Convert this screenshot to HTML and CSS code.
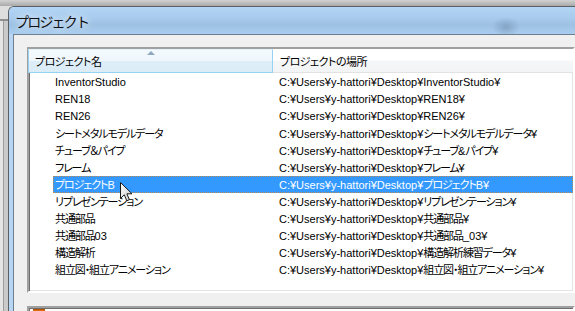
FILE: index.html
```html
<!DOCTYPE html>
<html lang="ja">
<head>
    <meta charset="UTF-8">
    <title>プロジェクト</title>
    <link rel="stylesheet" href="styles.css">
</head>
<body>
    <div class="window">
        <div class="titlebar">
            <span class="title">プロジェクト</span>
        </div>
        <div class="client">
            <div class="listview">
                <div class="lv-header">
                    <div class="hd-cell hd-name"><span class="sort-arrow"></span>プロジェクト名</div>
                    <div class="hd-cell hd-path">プロジェクトの場所</div>
                </div>
                <div class="lv-rows">
                    <div class="row"><div class="item"><span class="c-name">InventorStudio</span><span class="c-path">C:¥Users¥y-hattori¥Desktop¥InventorStudio¥</span></div></div>
                    <div class="row"><div class="item"><span class="c-name">REN18</span><span class="c-path">C:¥Users¥y-hattori¥Desktop¥REN18¥</span></div></div>
                    <div class="row"><div class="item"><span class="c-name">REN26</span><span class="c-path">C:¥Users¥y-hattori¥Desktop¥REN26¥</span></div></div>
                    <div class="row"><div class="item"><span class="c-name"><span class="ja">シートメタルモデルデータ</span></span><span class="c-path">C:¥Users¥y-hattori¥Desktop¥<span class="ja">シートメタルモデルデータ</span>¥</span></div></div>
                    <div class="row"><div class="item"><span class="c-name"><span class="ja">チューブ＆パイプ</span></span><span class="c-path">C:¥Users¥y-hattori¥Desktop¥<span class="ja">チューブ</span>&amp;<span class="ja">パイプ</span>¥</span></div></div>
                    <div class="row"><div class="item"><span class="c-name"><span class="ja">フレーム</span></span><span class="c-path">C:¥Users¥y-hattori¥Desktop¥<span class="ja">フレーム</span>¥</span></div></div>
                    <div class="row selected"><div class="item"><span class="c-name"><span class="ja">プロジェクト</span>B</span><span class="c-path">C:¥Users¥y-hattori¥Desktop¥<span class="ja">プロジェクト</span>B¥</span></div></div>
                    <div class="row"><div class="item"><span class="c-name"><span class="ja">リプレゼンテーション</span></span><span class="c-path">C:¥Users¥y-hattori¥Desktop¥<span class="ja">リプレゼンテーション</span>¥</span></div></div>
                    <div class="row"><div class="item"><span class="c-name"><span class="ja">共通部品</span></span><span class="c-path">C:¥Users¥y-hattori¥Desktop¥<span class="ja">共通部品</span>¥</span></div></div>
                    <div class="row"><div class="item"><span class="c-name"><span class="ja">共通部品</span>03</span><span class="c-path">C:¥Users¥y-hattori¥Desktop¥<span class="ja">共通部品</span>_03¥</span></div></div>
                    <div class="row"><div class="item"><span class="c-name"><span class="ja">構造解析</span></span><span class="c-path">C:¥Users¥y-hattori¥Desktop¥<span class="ja">構造解析練習データ</span>¥</span></div></div>
                    <div class="row"><div class="item"><span class="c-name"><span class="ja">組立図・組立アニメーション</span></span><span class="c-path">C:¥Users¥y-hattori¥Desktop¥<span class="ja">組立図・組立アニメーション</span>¥</span></div></div>
                </div>
            </div>
            <div class="panel">
                <span class="panel-icon"></span>
            </div>
        </div>
    </div>
    <svg class="cursor" width="14" height="21" viewBox="0 0 14 21">
        <defs>
            <linearGradient id="cur" x1="0" y1="0" x2="1" y2="1">
                <stop offset="0" stop-color="#ffffff"/>
                <stop offset="1" stop-color="#c8c8c8"/>
            </linearGradient>
        </defs>
        <path d="M0.5 0.5 L0.5 16.5 L4.3 12.8 L6.8 18.8 L9.4 17.7 L6.9 11.8 L12 11.8 Z" fill="url(#cur)" stroke="#1a1a1a" stroke-width="1" stroke-linejoin="round"/>
    </svg>
</body>
</html>
```

FILE: styles.css
```css
body {
    margin: 0;
    width: 575px;
    height: 311px;
    overflow: hidden;
    position: relative;
    font-family: 'Liberation Sans', 'Noto Sans CJK JP', sans-serif;
    background:
        linear-gradient(#d2d2d2, #a9a9a9) 0 0 / 100% 6px no-repeat,
        linear-gradient(#dedede, #dedede) 0 6px / 100% 13px no-repeat,
        linear-gradient(#8f8f8f, #8f8f8f) 0 19px / 100% 2px no-repeat,
        linear-gradient(to right, #e4e4e4 3px, #9c9c9c 3px, #9c9c9c 4px, #cacaca 4px) 0 21px / 100% 100% no-repeat;
}
.window {
    margin: 6px 0 0 8px;
    height: 305px;
    box-sizing: border-box;
    border-top: 1px solid #5c5f63;
    border-left: 1px solid #5c5f63;
    border-top-left-radius: 6px;
    padding-left: 4px;
    background: #b7d6f3;
    overflow: hidden;
}
.titlebar {
    height: 27px;
    margin-left: -4px;
    padding-left: 6px;
    display: flex;
    align-items: center;
    background:
        radial-gradient(ellipse 14px 10px at 497px 20px, rgba(110, 140, 170, 0.55), rgba(110, 140, 170, 0)),
        linear-gradient(#b3d6f6, #a8cbee 40%, #9ec1e3 65%, #a9cdf0);
}
.title {
    font-family: 'Noto Sans CJK JP', sans-serif;
    font-size: 14px;
    letter-spacing: -1.8px;
    color: #111;
    text-shadow: 0 0 8px #e6f2fc, 0 0 6px #e6f2fc;
}
.client {
    height: 100%;
    border-top: 1px solid #6d7e8f;
    border-left: 1px solid #6d7e8f;
    background: #f0f0f0;
    padding: 12px 0 0 13px;
}
.listview {
    height: 246px;
    box-sizing: border-box;
    border: 2px solid;
    border-color: #a0a0a0 #ffffff #ffffff #a0a0a0;
    box-shadow: inset 1px 1px 0 #6e6e6e, inset -1px -1px 0 #e3e3e3;
    background: #fff;
    font-size: 11px;
    font-feature-settings: "palt";
}
.ja {
    font-family: 'Noto Sans CJK JP', sans-serif;
    letter-spacing: -1.1px;
}
.lv-header {
    display: flex;
    height: 24px;
    margin-left: -1px;
}
.hd-cell {
    box-sizing: border-box;
    display: flex;
    align-items: center;
    font-family: 'Noto Sans CJK JP', sans-serif;
    font-size: 11px;
    letter-spacing: -0.5px;
    color: #000;
}
.hd-name {
    position: relative;
    width: 245px;
    padding-left: 6px;
    border: 1px solid #96d2f1;
    border-top-color: #e4f3fb;
    background: linear-gradient(#f3f9fd 0, #f0f7fc 48%, #deeef8 52%, #dbecf7 100%);
}
.sort-arrow {
    position: absolute;
    top: 1px;
    left: 118px;
    width: 0;
    height: 0;
    border-left: 4px solid transparent;
    border-right: 4px solid transparent;
    border-bottom: 4px solid #8ea9bf;
}
.hd-path {
    flex: 1;
    padding-left: 7px;
    border-bottom: 1px solid #e2e2e2;
    background: linear-gradient(#ffffff 0, #ffffff 48%, #f5f6f7 52%, #f3f4f6 100%);
}
.lv-rows {
    margin-top: 1px;
}
.row {
    display: flex;
    height: 17px;
    line-height: 17px;
    padding-left: 24px;
}
.item {
    flex: 1;
    display: flex;
    white-space: nowrap;
    color: #000;
}
.c-name {
    width: 220px;
    flex: none;
    box-sizing: border-box;
    padding-left: 2px;
}
.c-path {
    padding-left: 6px;
}
.row.selected .item {
    background: #3399ff;
    color: #fff;
    outline: 1px dotted #b98a5a;
    outline-offset: -1px;
}
.panel {
    margin-top: 13px;
    height: 20px;
    border: 2px solid;
    border-color: #a0a0a0 #ffffff #ffffff #a0a0a0;
    box-shadow: inset 1px 1px 0 #6e6e6e;
    background: #fff;
    padding: 1px 0 0 4px;
}
.panel-icon {
    display: block;
    width: 12px;
    height: 10px;
    background: #e46c0a;
    border-top: 1px solid #b55305;
}
.cursor {
    position: absolute;
    left: 120px;
    top: 182px;
}
```
